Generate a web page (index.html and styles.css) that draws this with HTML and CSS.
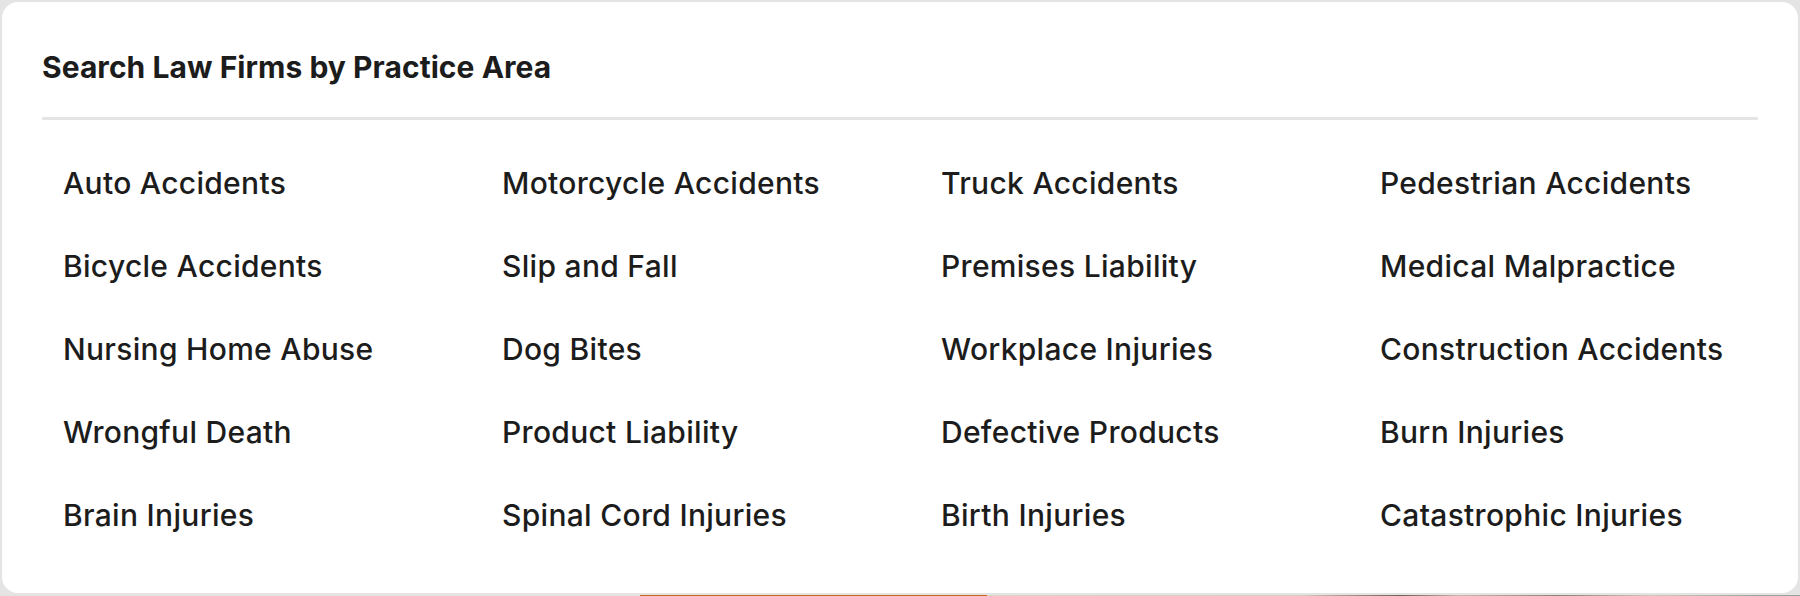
FILE: index.html
```html
<!DOCTYPE html>
<html lang="en">
<head>
<meta charset="utf-8">
<title>Search Law Firms by Practice Area</title>
<link rel="stylesheet" href="styles.css">
</head>
<body>
<section class="card">
  <h2 class="card-title">Search Law Firms by Practice Area</h2>
  <hr class="divider">
  <ul class="areas">
    <li><a href="#">Auto Accidents</a></li>
    <li><a href="#">Motorcycle Accidents</a></li>
    <li><a href="#">Truck Accidents</a></li>
    <li><a href="#">Pedestrian Accidents</a></li>
    <li><a href="#">Bicycle Accidents</a></li>
    <li><a href="#">Slip and Fall</a></li>
    <li><a href="#">Premises Liability</a></li>
    <li><a href="#">Medical Malpractice</a></li>
    <li><a href="#">Nursing Home Abuse</a></li>
    <li><a href="#">Dog Bites</a></li>
    <li><a href="#">Workplace Injuries</a></li>
    <li><a href="#">Construction Accidents</a></li>
    <li><a href="#">Wrongful Death</a></li>
    <li><a href="#">Product Liability</a></li>
    <li><a href="#">Defective Products</a></li>
    <li><a href="#">Burn Injuries</a></li>
    <li><a href="#">Brain Injuries</a></li>
    <li><a href="#">Spinal Cord Injuries</a></li>
    <li><a href="#">Birth Injuries</a></li>
    <li><a href="#">Catastrophic Injuries</a></li>
  </ul>
</section>
<div class="below"></div>
</body>
</html>
```

FILE: styles.css
```css
html, body {
  margin: 0;
  padding: 0;
  background: #e4e4e4;
}

body {
  width: 1800px;
  height: 596px;
  overflow: hidden;
  font-family: Inter, "Noto Sans", "Liberation Sans", sans-serif;
  color: #1c1c1c;
}

.card {
  box-sizing: border-box;
  width: 1800px;
  height: 595px;
  background: #ffffff;
  border: 2px solid #e4e4e4;
  border-radius: 18px;
  padding: 47px 40px 0 40px;
}

.card-title {
  margin: 0;
  font-size: 30px;
  line-height: 36px;
  font-weight: 700;
  letter-spacing: 0.05px;
  color: #1c1c1c;
}

.divider {
  margin: 32px 0 0 0;
  border: 0;
  height: 3px;
  background: #e5e5e5;
  width: 1716px;
}

.areas {
  list-style: none;
  margin: 21px 0 0 0;
  padding: 0 0 0 21px;
  display: grid;
  grid-template-columns: repeat(4, 357px);
  column-gap: 82px;
  font-size: 30px;
}

.areas li {
  padding: 23.5px 0;
  line-height: 36px;
  font-size: 30px;
}

.areas a {
  color: #1c1c1c;
  text-decoration: none;
  font-size: 30px;
  font-weight: 500;
  letter-spacing: 0.3px;
}

.below {
  height: 1px;
  background: linear-gradient(to right,
    #e2e2e2 0, #e2e2e2 640px,
    #c8671f 640px, #c8671f 987px,
    #ddd3c6 987px, #d8cdbf 1300px,
    #b8a898 1330px, #6e5f54 1400px,
    #c9b9a6 1460px, #8d8074 1560px,
    #d3c6b5 1650px, #9aa39a 1760px, #9aa39a 1800px);
}
```
